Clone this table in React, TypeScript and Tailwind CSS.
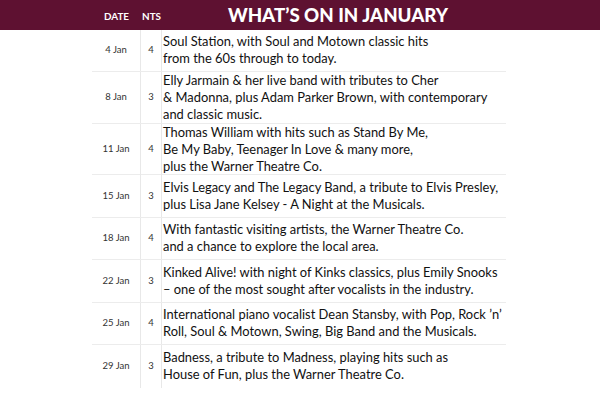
import React from "react";

type Show = {
  date: string;
  nights: number;
  lines: string[];
};

const shows: Show[] = [
  {
    date: "4 Jan",
    nights: 4,
    lines: ["Soul Station, with Soul and Motown classic hits", "from the 60s through to today."],
  },
  {
    date: "8 Jan",
    nights: 3,
    lines: [
      "Elly Jarmain & her live band with tributes to Cher",
      "& Madonna, plus Adam Parker Brown, with contemporary",
      "and classic music.",
    ],
  },
  {
    date: "11 Jan",
    nights: 4,
    lines: [
      "Thomas William with hits such as Stand By Me,",
      "Be My Baby, Teenager In Love & many more,",
      "plus the Warner Theatre Co.",
    ],
  },
  {
    date: "15 Jan",
    nights: 3,
    lines: [
      "Elvis Legacy and The Legacy Band, a tribute to Elvis Presley,",
      "plus Lisa Jane Kelsey - A Night at the Musicals.",
    ],
  },
  {
    date: "18 Jan",
    nights: 4,
    lines: ["With fantastic visiting artists, the Warner Theatre Co.", "and a chance to explore the local area."],
  },
  {
    date: "22 Jan",
    nights: 3,
    lines: [
      "Kinked Alive! with night of Kinks classics, plus Emily Snooks",
      "– one of the most sought after vocalists in the industry.",
    ],
  },
  {
    date: "25 Jan",
    nights: 4,
    lines: [
      "International piano vocalist Dean Stansby, with Pop, Rock ’n’",
      "Roll, Soul & Motown, Swing, Big Band and the Musicals.",
    ],
  },
  {
    date: "29 Jan",
    nights: 3,
    lines: ["Badness, a tribute to Madness, playing hits such as", "House of Fun, plus the Warner Theatre Co."],
  },
];

function ShowRow({ show, last }: { show: Show; last: boolean }) {
  const tall = show.lines.length > 2;
  return (
    <div
      className={`grid grid-cols-[49px_21px_344px] ${tall ? "h-[51.5px]" : "h-[42.5px]"} ${
        last ? "" : "border-b border-[#ececec]"
      }`}
    >
      <div className="flex items-center justify-center text-[9.5px] text-[#333] border-r border-[#e8e8e8]">
        {show.date}
      </div>
      <div className="flex items-center justify-center text-[9.5px] text-[#333] border-r border-[#e8e8e8]">
        {show.nights}
      </div>
      <div className="flex flex-col justify-center pl-[1px] text-[12.9px] leading-[17px] text-[#111]">
        {show.lines.map((line, i) => (
          <span key={i} className="whitespace-nowrap">
            {line}
          </span>
        ))}
      </div>
    </div>
  );
}

export default function App() {
  return (
    <div className="w-[600px] h-[400px] bg-white overflow-hidden font-['Lato',sans-serif]">
      <div className="h-[29.5px] bg-[#5e1131] text-white">
        <div className="ml-[92px] w-[414px] h-full grid grid-cols-[49px_21px_344px] items-center">
          <div className="text-center text-[9.9px] font-bold pt-[3px]">DATE</div>
          <div className="text-center text-[9.9px] font-bold pt-[3px]">NTS</div>
          <div className="text-center text-[18.7px] font-black pl-[8px]">WHAT’S ON IN JANUARY</div>
        </div>
      </div>
      <div className="ml-[92px] w-[414px]">
        {shows.map((show, i) => (
          <ShowRow key={show.date} show={show} last={i === shows.length - 1} />
        ))}
      </div>
    </div>
  );
}
